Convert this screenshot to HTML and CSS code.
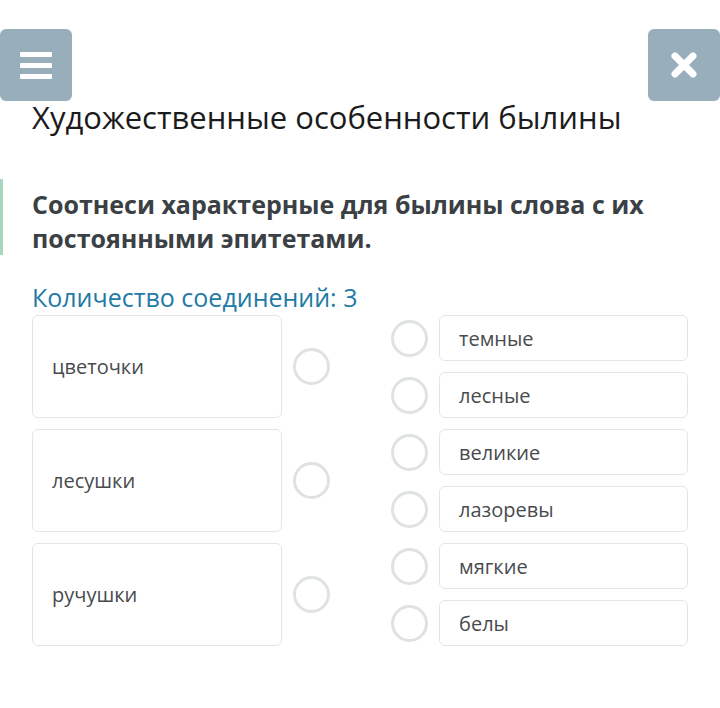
FILE: index.html
```html
<!DOCTYPE html>
<html lang="ru">
<head>
    <meta charset="UTF-8">
    <meta name="viewport" content="width=device-width, initial-scale=1.0">
    <title>Художественные особенности былины</title>
    <link rel="stylesheet" href="styles.css">
</head>
<body>

<header class="topbar">
    <button class="icon-btn" aria-label="Меню">
        <svg width="32" height="27" viewBox="0 0 32 27">
            <rect x="0" y="0" width="32" height="5" rx="1" fill="#fff"/>
            <rect x="0" y="11" width="32" height="5" rx="1" fill="#fff"/>
            <rect x="0" y="22" width="32" height="5" rx="1" fill="#fff"/>
        </svg>
    </button>
    <button class="icon-btn" aria-label="Закрыть">
        <svg width="26" height="26" viewBox="0 0 26 26">
            <path d="M4 4 L22 22 M22 4 L4 22" stroke="#fff" stroke-width="7" stroke-linecap="round"/>
        </svg>
    </button>
</header>

<h1 class="title">Художественные особенности былины</h1>

<div class="question">
    <p>Соотнеси характерные для былины слова с их постоянными эпитетами.</p>
</div>

<p class="count">Количество соединений: 3</p>

<div class="match">
    <div class="column">
        <div class="row">
            <div class="card card-big">цветочки</div>
            <span class="dot"></span>
        </div>
        <div class="row">
            <div class="card card-big">лесушки</div>
            <span class="dot"></span>
        </div>
        <div class="row">
            <div class="card card-big">ручушки</div>
            <span class="dot"></span>
        </div>
    </div>

    <div class="column">
        <div class="row">
            <span class="dot"></span>
            <div class="card card-small">темные</div>
        </div>
        <div class="row">
            <span class="dot"></span>
            <div class="card card-small">лесные</div>
        </div>
        <div class="row">
            <span class="dot"></span>
            <div class="card card-small">великие</div>
        </div>
        <div class="row">
            <span class="dot"></span>
            <div class="card card-small">лазоревы</div>
        </div>
        <div class="row">
            <span class="dot"></span>
            <div class="card card-small">мягкие</div>
        </div>
        <div class="row">
            <span class="dot"></span>
            <div class="card card-small">белы</div>
        </div>
    </div>
</div>

</body>
</html>
```

FILE: styles.css
```css
body {
    font-family: "Open Sans", "Noto Sans", sans-serif;
    background-color: #fff;
    margin: 0;
    padding: 0;
}
.topbar {
    display: flex;
    justify-content: space-between;
    padding-top: 29px;
}
.icon-btn {
    width: 72px;
    height: 72px;
    background-color: #98aeba;
    border: none;
    border-radius: 6px;
    display: flex;
    align-items: center;
    justify-content: center;
    padding: 0;
}
.title {
    font-size: 31px;
    font-weight: 400;
    color: #1b1b1b;
    line-height: 32px;
    margin: 0 0 0 32px;
}
.question {
    border-left: 3px solid #a9d6bd;
    margin-top: 46px;
    padding: 8px 20px 0 29px;
}
.question p {
    margin: 0;
    font-size: 25px;
    font-weight: 700;
    line-height: 34px;
    color: #3b4045;
}
.count {
    margin: 27px 0 0 32px;
    font-size: 25px;
    line-height: 30px;
    color: #1f7aa6;
}
.match {
    display: flex;
    justify-content: space-between;
    padding: 0 32px;
    margin-top: 3px;
}
.column {
    display: flex;
    flex-direction: column;
    gap: 11px;
}
.row {
    display: flex;
    align-items: center;
    gap: 11px;
}
.card {
    box-sizing: border-box;
    background-color: #fff;
    border: 1px solid #e2e6e8;
    border-radius: 6px;
    padding-left: 19px;
    display: flex;
    align-items: center;
    font-size: 20px;
    color: #484b4e;
}
.card-big {
    width: 250px;
    height: 103px;
}
.card-small {
    width: 249px;
    height: 46px;
}
.dot {
    box-sizing: border-box;
    width: 37px;
    height: 37px;
    border: 3px solid #dfe2e4;
    border-radius: 50%;
}
```
